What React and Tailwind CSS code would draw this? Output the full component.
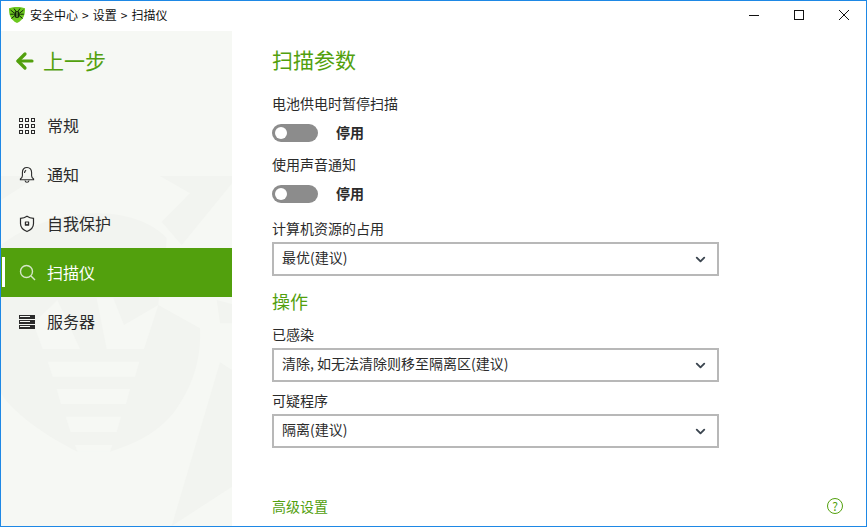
import { ArrowLeft, ChevronDown } from 'lucide-react'

const FONT = '[font-family:"Noto_Sans_CJK_SC","Noto_Sans",sans-serif]'

const GridIcon = () => (
  <svg width="16" height="16" viewBox="0 0 16 16" fill="none" stroke="#2b2b2b" strokeWidth="1">
    {[0, 6, 12].map((y) =>
      [0, 6, 12].map((x) => <rect key={`${x}-${y}`} x={x + 0.5} y={y + 0.5} width="3" height="3" />)
    )}
  </svg>
)

const BellIcon = () => (
  <svg width="16" height="18" viewBox="0 0 16 18" fill="none" stroke="#2b2b2b" strokeWidth="1.1">
    <path d="M8 1.500c-3 0-4.600 2.200-4.600 5v3.200c0 1.600-.9 2.500-2 3.300v.8h13.200V13c-1.100-.8-2-1.700-2-3.300V6.500C12.600 3.700 11 1.500 8 1.500z" />
    <path d="M6 14.500c.2 1.200 1 1.800 2 1.800s1.800-.6 2-1.800" />
    <path d="M5.500 7c0-1.300.6-2.300 1.600-2.800" />
  </svg>
)

const ShieldIcon = () => (
  <svg width="16" height="18" viewBox="0 0 16 18" fill="none" stroke="#2b2b2b" strokeWidth="1.2">
    <path d="M8 1.200c1.800 1.300 4 2 6.500 2.100v5.200c0 3.700-2.700 6.500-6.500 8-3.800-1.500-6.500-4.300-6.500-8V3.300C4 3.200 6.200 2.500 8 1.200z" />
    <rect x="5.800" y="6.500" width="4.400" height="4.200" rx=".5" fill="#2b2b2b" stroke="none" />
    <circle cx="8" cy="8.200" r="1" fill="#f6f8f4" stroke="none" />
  </svg>
)

const SearchIcon = () => (
  <svg width="17" height="17" viewBox="0 0 17 17" fill="none" stroke="#d5e6c8" strokeWidth="1.4">
    <circle cx="7.500" cy="7.500" r="6" />
    <path d="M12 12l4 4" />
  </svg>
)

const ServerIcon = () => (
  <svg width="16" height="14" viewBox="0 0 16 14">
    <rect x="0" y="0" width="16" height="4" fill="#2b2b2b" />
    <rect x="0" y="5" width="16" height="4" fill="#2b2b2b" />
    <rect x="0" y="10" width="16" height="4" fill="#2b2b2b" />
    <rect x="1" y="1" width="10" height="1" fill="#f6f8f4" />
    <rect x="1" y="6" width="10" height="1" fill="#f6f8f4" />
    <rect x="1" y="11" width="10" height="1" fill="#f6f8f4" />
  </svg>
)

// logo: green shield with a black spider on it
const Logo = () => (
  <svg width="16" height="16" viewBox="0 0 16 16">
    <path d="M8 0c2.500 0 5.500.3 8 1.200 0 6-.8 11.300-8 14.800C.8 12.500 0 7.200 0 1.200 2.500.3 5.500 0 8 0z" fill="#6cc81e" />
    <ellipse cx="8" cy="7.500" rx="2.800" ry="3.400" fill="#12240a" />
    <path d="M1.500 3l3.500 2.800M14.500 3l-3.500 2.800M1.200 7.200h3.600M14.800 7.200h-3.600M2.500 11.500l2.800-2.500M13.500 11.500l-2.800-2.500M5 1.500l1.800 2.700M11 1.500L9.200 4.200" stroke="#12240a" strokeWidth="1" fill="none" />
    <path d="M8 5v5" stroke="#7fd23a" strokeWidth="1" />
  </svg>
)

// faint spider-shield behind the menu, coordinates traced from the page at 3x
const Watermark = () => (
  <svg className="absolute left-0 top-[119px]" width="231" height="377" viewBox="3 0 693 1131">
    <g fill="#f2f4f0">
      <path d="M3 78H115L3 150Z" />
      <path d="M480 78L570 130L485 215L545 285L696 100V78Z" />
      <path d="M3 285C100 210 220 190 290 190C400 190 470 230 500 265C500 300 480 400 475 465L600 535C605 640 570 720 520 790C470 850 400 885 330 905H232C140 860 40 790 3 730Z" />
      <path d="M650 450L696 462V520L660 520Z" />
      <path d="M660 637L696 660V1010L515 1128Z" />
    </g>
    <g fill="#f6f8f4">
      <path d="M172 450L240 597H128L100 520Z" />
      <path d="M290 445H340L372 525L475 465L432 597H320Z" />
      <path d="M143 635H418L405 680H158Z" />
      <path d="M170 717H390L378 762H183Z" />
      <path d="M197 800H363L350 846H212Z" />
      <path d="M225 885H337L330 905H232Z" />
    </g>
  </svg>
)

const navItems = [
  { icon: GridIcon, label: '常规' },
  { icon: BellIcon, label: '通知' },
  { icon: ShieldIcon, label: '自我保护' },
  { icon: SearchIcon, label: '扫描仪', active: true },
  { icon: ServerIcon, label: '服务器' }
]

const Toggle = () => (
  <div className="flex items-center h-[18px]">
    <div className="w-[46px] h-[18px] rounded-full bg-[#8c8c8c] flex items-center pl-[3px]">
      <div className="w-[12px] h-[12px] rounded-full bg-white" />
    </div>
    <span className="ml-[18px] pb-[2px] text-sm font-bold text-[#2b2b2b]">停用</span>
  </div>
)

const Select = ({ value }) => (
  <div className="w-[447px] h-[34px] border-2 border-[#b8b8b8] flex items-center justify-between pl-[8px] pr-[9px] text-sm text-[#2b2b2b]">
    <span className="pb-[4px]">{value}</span>
    <ChevronDown size={15} strokeWidth={3} className="text-[#3c4650]" />
  </div>
)

const Label = ({ children, className = '' }) => (
  <div className={`text-sm leading-[20px] text-[#2b2b2b] ${className}`}>{children}</div>
)

const WinButton = ({ children }) => (
  <div className="w-[45px] flex items-center justify-center">{children}</div>
)

export default function App() {
  return (
    <div className={`w-[867px] h-[527px] bg-white border border-[#1e88e5] flex flex-col overflow-hidden ${FONT}`}>
      {/* Title bar */}
      <div className="h-[30px] shrink-0 flex items-center justify-between pl-[8px] pb-[2px]">
        <div className="flex items-center text-xs text-[#111]">
          <Logo />
          <div className="ml-[5px] flex gap-[4px]">
            <span>安全中心</span>
            <span>&gt;</span>
            <span>设置</span>
            <span>&gt;</span>
            <span>扫描仪</span>
          </div>
        </div>
        <div className="flex items-center">
          <WinButton>
            <svg width="10" height="10" viewBox="0 0 10 10" stroke="#111" strokeWidth="1">
              <path d="M0 5.500H10" />
            </svg>
          </WinButton>
          <WinButton>
            <svg width="10" height="10" viewBox="0 0 10 10" fill="none" stroke="#111" strokeWidth="1">
              <rect x=".5" y=".5" width="9" height="9" />
            </svg>
          </WinButton>
          <WinButton>
            <svg width="10" height="10" viewBox="0 0 10 10" stroke="#111" strokeWidth="1">
              <path d="M0 0L10 10M10 0L0 10" />
            </svg>
          </WinButton>
        </div>
      </div>

      <div className="flex flex-1 min-h-0">
        {/* Sidebar */}
        <aside className="relative w-[231px] shrink-0 bg-[#f6f8f4]">
          <Watermark />
          <div className="relative">
            <div className="h-[70px] pb-[10px] flex items-center pl-[12px] text-[#52a00d]">
              <ArrowLeft size={24} strokeWidth={3.2} />
              <span className="ml-[6px] text-[21px]">上一步</span>
            </div>
            <nav>
              {navItems.map((item) => {
                const Icon = item.icon
                return (
                  <div
                    key={item.label}
                    className={`relative h-[49px] flex items-center text-base ${item.active ? 'bg-[#52a00d] text-white' : 'text-[#2b2b2b]'}`}
                  >
                    {item.active && <div className="absolute left-[1px] top-[9px] w-[3px] h-[30px] bg-white" />}
                    <div className="w-[46px] pl-[18px] flex items-center">
                      <Icon />
                    </div>
                    <span className="pb-[2px]">{item.label}</span>
                  </div>
                )
              })}
            </nav>
          </div>
        </aside>

        {/* Settings */}
        <main className="flex-1 pl-[40px] flex flex-col">
          <h1 className="mt-[13px] text-[21px] leading-[30px] text-[#52a00d]">扫描参数</h1>
          <Label className="mt-[19px]">电池供电时暂停扫描</Label>
          <div className="mt-[11px]"><Toggle /></div>
          <Label className="mt-[12px]">使用声音通知</Label>
          <div className="mt-[11px]"><Toggle /></div>
          <Label className="mt-[15px]">计算机资源的占用</Label>
          <div className="mt-[4px]"><Select value="最优(建议)" /></div>
          <h2 className="mt-[12px] text-lg leading-[26px] text-[#52a00d]">操作</h2>
          <Label className="mt-[10px]">已感染</Label>
          <div className="mt-[4px]"><Select value="清除, 如无法清除则移至隔离区(建议)" /></div>
          <Label className="mt-[8px]">可疑程序</Label>
          <div className="mt-[4px]"><Select value="隔离(建议)" /></div>
          <div className="mt-auto mb-[10px] pr-[23px] flex items-center justify-between">
            <span className="text-sm text-[#52a00d]">高级设置</span>
            <span className="w-[16px] h-[16px] rounded-full border border-[#52a00d] text-[#52a00d] text-xs leading-[14px] text-center">?</span>
          </div>
        </main>
      </div>
    </div>
  )
}
